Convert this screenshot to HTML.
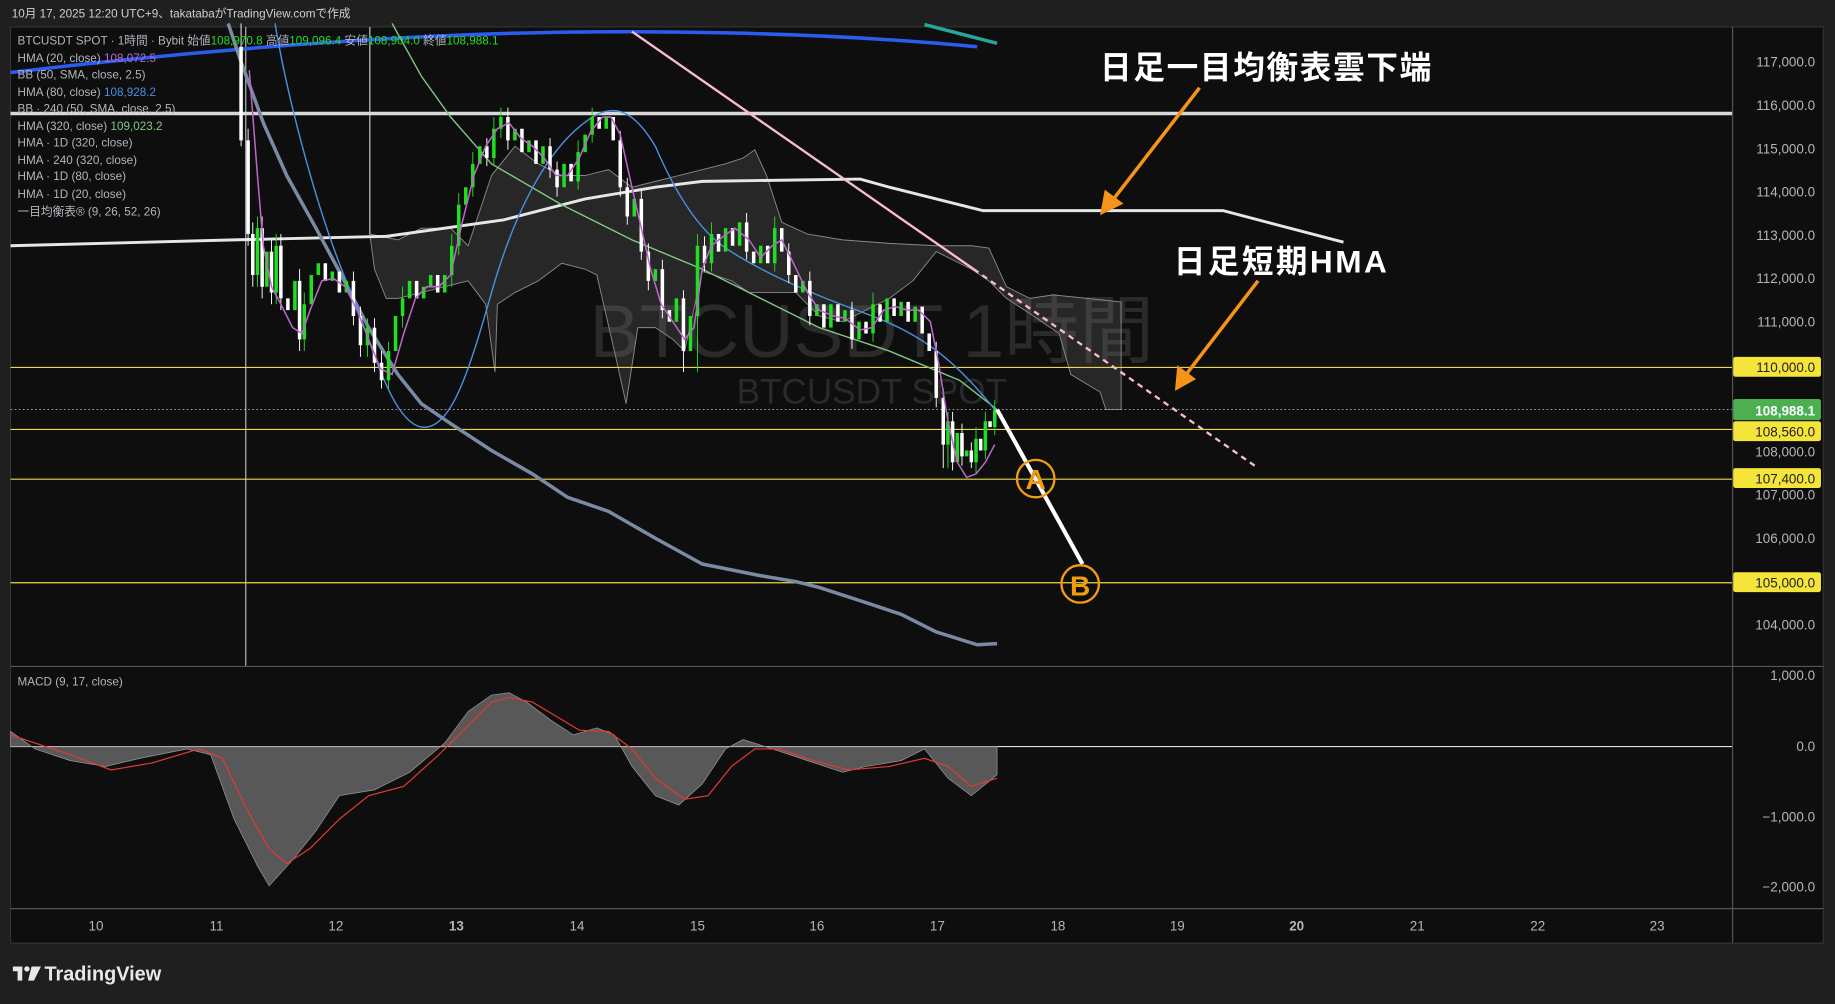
<!DOCTYPE html>
<html><head><meta charset="utf-8"><style>
html,body{margin:0;padding:0;background:#1f1f1f;width:1835px;height:1004px;overflow:hidden}
svg{display:block}
text{font-family:"Liberation Sans","Noto Sans CJK JP",sans-serif}
</style></head><body>
<svg width="1835" height="1004" viewBox="0 0 1568 858" preserveAspectRatio="none" xmlns="http://www.w3.org/2000/svg">
<rect x="0" y="0" width="1568" height="858" fill="#1f1f1f"/>
<text x="10" y="15" font-size="10" fill="#d0d0d0">10月 17, 2025 12:20 UTC+9、takatabaがTradingView.comで作成</text>
<rect x="9" y="23" width="1549" height="783" fill="#0e0e0e" stroke="#333" stroke-width="1"/>
<text x="745" y="305" font-size="64" fill="#2a2a2a" text-anchor="middle">BTCUSDT 1時間</text>
<text x="745" y="345" font-size="30" fill="#2a2a2a" text-anchor="middle">BTCUSDT SPOT</text>
<polygon points="316,200 340,205 360,195 385,195 400,210 420,150 440,125 460,140 480,150 500,150 520,145 540,160 560,155 580,150 600,145 620,140 635,135 645,128 655,150 668,190 690,200 720,205 760,208 800,210 830,210 845,212 860,245 880,255 900,252 958,258 958,350 945,350 940,335 915,320 905,285 880,268 860,255 845,240 830,230 800,215 780,240 760,255 740,265 720,275 700,270 690,260 680,250 660,250 640,250 625,240 610,235 600,232 585,300 575,290 560,280 545,280 535,345 525,300 510,235 500,230 480,225 460,240 440,250 425,260 423,318 415,260 400,240 380,245 360,250 340,255 330,255 320,230"
 fill="rgba(140,140,140,0.2)" stroke="#888" stroke-width="0.8"/>
<line x1="316" y1="23" x2="316" y2="200" stroke="#aaa" stroke-width="1.2"/>
<line x1="210" y1="23" x2="210" y2="569" stroke="#bbb" stroke-width="1"/>
<g stroke="#e8d84a" stroke-width="1">
<line x1="9" y1="314" x2="1480" y2="314"/><line x1="9" y1="367" x2="1480" y2="367"/>
<line x1="9" y1="409.5" x2="1480" y2="409.5"/><line x1="9" y1="498" x2="1480" y2="498"/>
</g>
<line x1="9" y1="350" x2="1480" y2="350" stroke="#aaa" stroke-width="0.8" stroke-dasharray="1.5,2"/>
<line x1="9" y1="97" x2="1480" y2="97" stroke="#d8d8d8" stroke-width="3"/>
<polyline points="9,210 200,205 330,202 430,188 500,170 560,160 600,155 735,153 760,160 840,180 1045,180 1148,207" fill="none" stroke="#e6e6e6" stroke-width="2.5"/>
<path d="M9,62 C150,45 300,33 420,29 C540,25 700,27 835,40" fill="none" stroke="#2a5cf0" stroke-width="3"/>
<line x1="790" y1="21" x2="852" y2="37" stroke="#26a69a" stroke-width="3"/>
<line x1="540" y1="27" x2="832" y2="230" stroke="#f8bbd0" stroke-width="2"/>
<line x1="832" y1="230" x2="1075" y2="400" stroke="#f8bbd0" stroke-width="2" stroke-dasharray="5,4"/>
<polyline points="195,20 205,50 225,105 245,150 270,195 290,232 315,280 340,320 360,345 385,362 420,385 455,405 485,425 520,437 560,460 600,482 650,492 680,497 700,502 740,515 770,525 800,540 835,551 852,550" fill="none" stroke="#7b8aa3" stroke-width="3" stroke-linejoin="round"/>
<polyline points="335,20 360,65 385,100 420,140 480,175 540,205 600,230 660,260 700,280 760,300 820,325 852,350" fill="none" stroke="#81c784" stroke-width="1.2"/>
<path d="M235,20 C245,80 270,180 300,250 C320,300 335,360 360,365 C385,368 400,320 420,250 C440,180 470,120 510,98 C530,88 545,100 560,125 C575,160 595,195 620,212 C650,232 690,250 740,268 C780,283 810,300 850,350" fill="none" stroke="#4a90e2" stroke-width="1.2"/>
<path stroke="#ffffff" stroke-width="3" fill="none" d="M206,40V120M212,120V200M216,200V235M224,195V245M232,215V250M240,210V255M246,255V265M256,240V290M278,225V240M290,232V250M302,240V270M308,270V295M320,280V310M326,310V325M356,240V255M374,235V250M416,125V135M434,100V120M446,110V130M458,120V140M470,125V145M476,145V160M488,140V155M512,100V110M524,100V120M530,120V160M536,160V185M548,170V215M554,215V240M566,230V265M572,265V275M584,255V300M602,210V225M614,200V215M626,195V210M638,190V215M644,215V225M656,210V225M668,195V215M674,215V235M680,235V250M692,240V270M704,260V280M716,260V275M728,265V290M740,275V285M752,260V275M764,255V270M776,258V275M788,262V285M794,285V300M800,300V340M806,340V380M814,360V395M822,370V390M830,385V395M838,375V385M846,360V365"/>
<path stroke="#ffffff" stroke-width="0.8" fill="none" d="M206,20V125M212,110V210M216,190V245M224,185V255M232,205V260M240,200V265M256,230V300M302,232V278M308,262V305M320,272V318M326,300V332M416,118V142M434,92V128M470,118V152M476,138V168M530,112V168M536,152V192M548,162V222M554,208V248M566,222V272M584,248V318M602,202V232M638,182V222M674,208V242M692,232V278M728,258V298M800,292V348M806,332V400M814,352V402M822,362V398M830,378V400"/>
<path stroke="#22dd22" stroke-width="3" fill="none" d="M220,195V235M228,215V245M236,210V250M252,240V265M260,260V290M266,235V260M272,225V235M284,232V240M296,240V250M314,280V295M332,300V325M338,270V300M344,255V270M350,240V255M362,245V255M368,235V245M380,235V250M386,210V235M392,175V210M398,160V175M404,140V160M410,125V140M422,110V135M428,100V110M440,110V120M452,120V130M464,125V140M482,140V160M494,130V155M500,115V130M506,100V115M518,100V110M542,170V185M560,230V240M578,255V275M590,270V300M596,210V270M608,200V225M620,195V215M632,190V210M650,210V225M662,195V225M686,240V250M698,260V270M710,260V280M722,265V275M734,275V290M746,260V285M758,255V275M770,258V270M782,262V275M810,360V380M818,370V395M826,385V390M834,375V395M842,360V385M850,350V365"/>
<path stroke="#22dd22" stroke-width="0.8" fill="none" d="M220,185V245M236,200V260M260,250V300M314,272V305M332,292V332M344,245V280M386,200V245M392,165V218M404,130V168M422,100V142M428,92V118M494,120V162M506,92V122M596,200V318M608,190V232M662,185V232M746,250V292M810,352V400M834,365V405M842,352V392M850,342V372"/>
<polyline fill="none" stroke="#ba68c8" stroke-width="1.3" points="213,60 220,150 225,210 232,245 240,260 250,280 258,285 265,265 275,240 285,238 295,245 305,265 315,290 325,315 335,320 345,285 355,255 365,245 375,245 385,235 395,190 405,150 415,125 425,110 435,105 445,118 455,125 465,135 475,150 485,150 495,135 505,112 515,100 522,100 530,115 540,160 548,195 556,230 565,260 575,275 585,290 593,280 600,230 608,210 618,202 628,195 640,205 650,220 660,210 668,205 678,225 690,250 700,265 712,270 722,272 735,282 745,280 755,265 765,262 775,265 785,265 795,275 802,310 810,360 818,395 826,408 834,405 842,395 850,380"/>
<line x1="852" y1="350" x2="925" y2="482" stroke="#fff" stroke-width="3.5"/>
<circle cx="885" cy="409" r="16" fill="none" stroke="#f39c12" stroke-width="2"/>
<text x="885" y="418" font-size="24" font-weight="bold" fill="#f39c12" text-anchor="middle">A</text>
<circle cx="923" cy="499" r="16" fill="none" stroke="#f39c12" stroke-width="2"/>
<text x="923" y="509" font-size="24" font-weight="bold" fill="#f39c12" text-anchor="middle">B</text>
<text x="940" y="67" font-size="27" font-weight="bold" fill="#fff" textLength="283">日足一目均衡表雲下端</text>
<text x="1003" y="233" font-size="27" font-weight="bold" fill="#fff" textLength="182">日足短期HMA</text>
<g stroke="#f7931a" stroke-width="3" fill="#f7931a">
<line x1="1025" y1="75" x2="950" y2="172"/>
<polygon points="940,184 944,162 960,174" stroke="none"/>
<line x1="1075" y1="240" x2="1012" y2="322"/>
<polygon points="1004,334 1006,312 1022,324" stroke="none"/>
</g>
<g font-size="10" fill="#b2b5be">
<text x="15" y="38">BTCUSDT SPOT · 1時間 · Bybit  始値<tspan fill="#22dd22">108,970.8</tspan>  高値<tspan fill="#22dd22">109,096.4</tspan>  安値<tspan fill="#22dd22">108,904.0</tspan>  終値<tspan fill="#22dd22">108,988.1</tspan></text>
<text x="15" y="53">HMA (20, close)  <tspan fill="#ba68c8">108,072.5</tspan></text>
<text x="15" y="67">BB (50, SMA, close, 2.5)</text>
<text x="15" y="82">HMA (80, close)  <tspan fill="#4a90e2">108,928.2</tspan></text>
<text x="15" y="96">BB · 240 (50, SMA, close, 2.5)</text>
<text x="15" y="111">HMA (320, close)  <tspan fill="#81c784">109,023.2</tspan></text>
<text x="15" y="125">HMA · 1D (320, close)</text>
<text x="15" y="140">HMA · 240 (320, close)</text>
<text x="15" y="154">HMA · 1D (80, close)</text>
<text x="15" y="169">HMA · 1D (20, close)</text>
<text x="15" y="184">一目均衡表® (9, 26, 52, 26)</text>
</g>
<line x1="9" y1="569.5" x2="1558" y2="569.5" stroke="#555" stroke-width="1"/>
<line x1="9" y1="638" x2="1480" y2="638" stroke="#ddd" stroke-width="1"/>
<text x="15" y="586" font-size="10" fill="#b2b5be">MACD (9, 17, close)</text>
<polygon points="9,638 9,625 30,640 60,650 90,655 120,648 160,640 180,645 200,700 220,740 230,757 250,735 270,710 290,680 320,675 350,660 380,635 400,608 420,594 435,592 450,600 470,615 490,628 510,622 525,628 540,655 560,680 580,688 600,670 620,640 635,632 660,640 690,650 720,660 740,655 770,650 790,640 810,665 830,680 852,662 852,638" fill="rgba(150,150,150,0.55)" stroke="#999" stroke-width="0.6"/>
<polyline points="9,628 30,635 60,645 95,658 130,652 170,640 190,648 210,690 230,725 245,738 265,725 290,700 315,680 345,672 375,645 400,620 420,600 435,596 455,600 475,612 495,624 520,625 540,640 560,665 585,683 605,680 625,655 645,640 665,640 695,650 725,658 760,655 790,648 810,655 830,672 852,665" fill="none" stroke="#e53935" stroke-width="1"/>
<line x1="1480.5" y1="23" x2="1480.5" y2="806" stroke="#555" stroke-width="1"/>
<line x1="9" y1="776.5" x2="1558" y2="776.5" stroke="#555" stroke-width="1"/>
<g font-size="11.5" fill="#b2b5be" text-anchor="end">
<text x="1551" y="57">117,000.0</text><text x="1551" y="94">116,000.0</text><text x="1551" y="131">115,000.0</text>
<text x="1551" y="168">114,000.0</text><text x="1551" y="205">113,000.0</text><text x="1551" y="242">112,000.0</text>
<text x="1551" y="279">111,000.0</text><text x="1551" y="390">108,000.0</text><text x="1551" y="427">107,000.0</text>
<text x="1551" y="464">106,000.0</text><text x="1551" y="538">104,000.0</text>
<text x="1551" y="581">1,000.0</text><text x="1551" y="642">0.0</text><text x="1551" y="702">−1,000.0</text><text x="1551" y="762">−2,000.0</text>
</g>
<g font-size="11.5" text-anchor="end">
<rect x="1481" y="305" width="75" height="17" rx="2" fill="#f5e43a"/><text x="1551" y="318" fill="#222">110,000.0</text>
<rect x="1481" y="341" width="75" height="18" rx="2" fill="#4caf50"/><text x="1551" y="355" fill="#fff" font-weight="bold">108,988.1</text>
<rect x="1481" y="360" width="75" height="17" rx="2" fill="#f5e43a"/><text x="1551" y="373" fill="#222">108,560.0</text>
<rect x="1481" y="400" width="75" height="17" rx="2" fill="#f5e43a"/><text x="1551" y="413" fill="#222">107,400.0</text>
<rect x="1481" y="489" width="75" height="17" rx="2" fill="#f5e43a"/><text x="1551" y="502" fill="#222">105,000.0</text>
</g>
<g font-size="11.5" fill="#b2b5be" text-anchor="middle">
<text x="82" y="795">10</text><text x="185" y="795">11</text><text x="287" y="795">12</text><text x="390" y="795" font-weight="bold">13</text>
<text x="493" y="795">14</text><text x="596" y="795">15</text><text x="698" y="795">16</text><text x="801" y="795">17</text>
<text x="904" y="795">18</text><text x="1006" y="795">19</text><text x="1108" y="795" font-weight="bold">20</text><text x="1211" y="795">21</text>
<text x="1314" y="795">22</text><text x="1416" y="795">23</text>
</g>
<g fill="#e8e8e8">
<rect x="11" y="826" width="8" height="4"/><rect x="15" y="826" width="4" height="12"/>
<circle cx="23" cy="828" r="2.3"/><polygon points="27,826 35,826 29,838 24,838"/>
</g>
<text x="38" y="838" font-size="17" font-weight="bold" fill="#e8e8e8">TradingView</text>
</svg>
</body></html>
